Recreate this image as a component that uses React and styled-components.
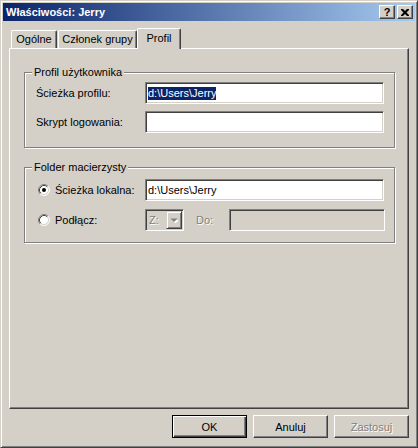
import styled, { createGlobalStyle } from "styled-components";

const GlobalStyle = createGlobalStyle`
  html, body {
    margin: 0;
    padding: 0;
    background: #d4d0c8;
  }

  body {
    font-family: "Liberation Sans", Arial, sans-serif;
    font-size: 11px;
    color: #000;
  }
`;

function RadioMark({ checked }) {
  return (
    <svg width="12" height="12" viewBox="0 0 12 12">
      <circle cx="6" cy="6" r="5" fill="#fff" />
      <path d="M2.11 9.89 A5.5 5.5 0 0 1 9.89 2.11" stroke="#808080" fill="none" />
      <path d="M9.89 2.11 A5.5 5.5 0 0 1 2.11 9.89" stroke="#fff" fill="none" />
      <path d="M2.82 9.18 A4.5 4.5 0 0 1 9.18 2.82" stroke="#404040" fill="none" />
      <path d="M9.18 2.82 A4.5 4.5 0 0 1 2.82 9.18" stroke="#d4d0c8" fill="none" />
      {checked && <circle cx="6" cy="6" r="2" fill="#000" />}
    </svg>
  );
}

function DownArrow() {
  return (
    <svg width="8" height="5" viewBox="0 0 8 5">
      <path d="M2 2h7l-3.5 3.5z" fill="#fff" />
      <path d="M0.5 0.5h7l-3.5 3.5z" fill="#808080" />
    </svg>
  );
}

export default function App() {
  return (
    <>
      <GlobalStyle />
      <Window>
        <TitleBar>
          <TitleText>Właściwości: Jerry</TitleText>
          <CaptionButton>?</CaptionButton>
          <CaptionButton $gap={2}>
            <svg width="8" height="7" viewBox="0 0 8 7">
              <path d="M0 0h2l2 2 2-2h2v1L5.5 3.5 8 6v1H6L4 5 2 7H0V6l2.5-2.5L0 1z" fill="#000" />
            </svg>
          </CaptionButton>
        </TitleBar>

        <Body>
          <TabStrip>
            <Tab $width={46}>Ogólne</Tab>
            <Tab $width={79} $offset={1}>Członek grupy</Tab>
            <Tab $width={44} $selected>Profil</Tab>
          </TabStrip>

          <Panel>
            <GroupBox>
              <Caption>Profil użytkownika</Caption>
              <Row>
                <FieldLabel>Ścieżka profilu:</FieldLabel>
                <Edit $width={239}>
                  <Selection>d:\Users\Jerry</Selection>
                </Edit>
              </Row>
              <Row>
                <FieldLabel>Skrypt logowania:</FieldLabel>
                <Edit $width={239} />
              </Row>
            </GroupBox>

            <GroupBox $gapAfterFirst={11} $gapRows={8}>
              <Caption>Folder macierzysty</Caption>
              <Row $radio>
                <RadioLabel>
                  <RadioMark checked />
                  <span>Ścieżka lokalna:</span>
                </RadioLabel>
                <Edit $width={239}>d:\Users\Jerry</Edit>
              </Row>
              <Row $radio>
                <RadioLabel>
                  <RadioMark />
                  <span>Podłącz:</span>
                </RadioLabel>
                <Combo>
                  <DisabledText>Z:</DisabledText>
                  <ComboButton>
                    <DownArrow />
                  </ComboButton>
                </Combo>
                <DoLabel>Do:</DoLabel>
                <Edit $width={156} $disabled />
              </Row>
            </GroupBox>
          </Panel>

          <ButtonRow>
            <PushButton $default>OK</PushButton>
            <PushButton>Anuluj</PushButton>
            <PushButton disabled>Zastosuj</PushButton>
          </ButtonRow>
        </Body>
      </Window>
    </>
  );
}

const Window = styled.div`
  width: 418px;
  height: 448px;
  box-sizing: border-box;
  padding: 2px;
  border: 1px solid;
  border-color: #d4d0c8 #404040 #404040 #d4d0c8;
  box-shadow: inset 1px 1px 0 #fff, inset -1px -1px 0 #808080;
  background: #d4d0c8;
  display: flex;
  flex-direction: column;
`;

const TitleBar = styled.div`
  height: 18px;
  display: flex;
  align-items: center;
  padding: 0 2px 0 3px;
  background: linear-gradient(to right, #0a246a, #a6caf0);
  color: #fff;
  font-weight: bold;
`;

const TitleText = styled.div`
  flex: 1;
  line-height: 13px;
`;

const CaptionButton = styled.div`
  width: 16px;
  height: 14px;
  box-sizing: border-box;
  margin-left: ${(p) => p.$gap || 0}px;
  display: flex;
  align-items: center;
  justify-content: center;
  background: #d4d0c8;
  border: 1px solid;
  border-color: #fff #404040 #404040 #fff;
  box-shadow: inset -1px -1px 0 #808080;
  color: #000;
  font-size: 11px;
  font-weight: bold;
  line-height: 11px;
`;

const Body = styled.div`
  flex: 1;
  padding: 7px 6px 0;
  display: flex;
  flex-direction: column;
`;

const TabStrip = styled.div`
  position: relative;
  z-index: 1;
  height: 21px;
  margin-bottom: -1px;
  padding-left: 2px;
  display: flex;
  align-items: flex-start;
`;

const Tab = styled.div`
  width: ${(p) => p.$width}px;
  height: ${(p) => (p.$selected ? 21 : 18)}px;
  margin-top: ${(p) => (p.$selected ? 0 : 2)}px;
  margin-left: ${(p) => p.$offset || 0}px;
  box-sizing: border-box;
  padding-top: ${(p) => (p.$selected ? 3 : 2)}px;
  display: flex;
  justify-content: center;
  background: #d4d0c8;
  border-left: 1px solid #fff;
  border-top: 1px solid #fff;
  border-right: 1px solid #404040;
  border-radius: 2px 2px 0 0;
  box-shadow: inset -1px 0 0 #808080;
  line-height: 13px;
  white-space: nowrap;
`;

const Panel = styled.div`
  height: 361px;
  box-sizing: border-box;
  padding: 23px 13px 0 14px;
  border: 1px solid;
  border-color: #fff #404040 #404040 #fff;
  box-shadow: inset -1px -1px 0 #808080;
  display: flex;
  flex-direction: column;
  gap: 19px;
`;

const GroupBox = styled.div`
  position: relative;
  border: 1px solid #808080;
  box-shadow: 1px 1px 0 #fff, inset 1px 1px 0 #fff;
  padding: ${(p) => p.$gapAfterFirst || 9}px 9px ${(p) => (p.$gapAfterFirst ? 11 : 14)}px 0;
  display: flex;
  flex-direction: column;
  gap: ${(p) => p.$gapRows || 7}px;
`;

const Caption = styled.div`
  position: absolute;
  top: -7px;
  left: 7px;
  padding: 0 2px;
  background: #d4d0c8;
  line-height: 13px;
`;

const Row = styled.div`
  height: 22px;
  display: flex;
  align-items: center;
  padding-left: ${(p) => (p.$radio ? 13 : 11)}px;
`;

const FieldLabel = styled.div`
  width: 109px;
  line-height: 13px;
`;

const RadioLabel = styled.div`
  width: 107px;
  display: flex;
  align-items: center;
  gap: 5px;
  line-height: 13px;

  svg {
    flex: none;
  }
`;

const Edit = styled.div`
  width: ${(p) => p.$width}px;
  height: 22px;
  box-sizing: border-box;
  padding: 0 2px;
  display: flex;
  align-items: center;
  border: 1px solid;
  border-color: #808080 #fff #fff #808080;
  box-shadow: inset 1px 1px 0 #404040, inset -1px -1px 0 #d4d0c8;
  background: ${(p) => (p.$disabled ? "#d4d0c8" : "#fff")};
  line-height: 13px;
  white-space: nowrap;
`;

const Selection = styled.span`
  background: #0a246a;
  color: #fff;
`;

const Combo = styled.div`
  width: 39px;
  height: 22px;
  box-sizing: border-box;
  padding: 1px 1px 1px 3px;
  display: flex;
  align-items: center;
  border: 1px solid;
  border-color: #808080 #fff #fff #808080;
  box-shadow: inset 1px 1px 0 #404040, inset -1px -1px 0 #d4d0c8;
  background: #d4d0c8;
`;

const DisabledText = styled.span`
  flex: 1;
  color: #808080;
  text-shadow: 1px 1px 0 #fff;
  line-height: 13px;
`;

const ComboButton = styled.div`
  width: 16px;
  height: 18px;
  box-sizing: border-box;
  display: flex;
  align-items: center;
  justify-content: center;
  border: 1px solid;
  border-color: #d4d0c8 #404040 #404040 #d4d0c8;
  box-shadow: inset 1px 1px 0 #fff, inset -1px -1px 0 #808080;
`;

const DoLabel = styled.div`
  width: 33px;
  margin-left: 12px;
  color: #808080;
  text-shadow: 1px 1px 0 #fff;
  line-height: 13px;
`;

const ButtonRow = styled.div`
  margin-top: 6px;
  display: flex;
  justify-content: flex-end;
  gap: 6px;
`;

const PushButton = styled.button`
  width: 75px;
  height: 23px;
  box-sizing: border-box;
  padding: 0;
  font-family: inherit;
  font-size: 11px;
  background: #d4d0c8;
  color: #000;
  border: 1px solid;
  border-color: ${(p) => (p.$default ? "#000" : "#fff #404040 #404040 #fff")};
  box-shadow: ${(p) =>
    p.$default
      ? "inset 1px 1px 0 #fff, inset -1px -1px 0 #404040, inset -2px -2px 0 #808080"
      : "inset -1px -1px 0 #808080"};

  &:disabled {
    color: #808080;
    text-shadow: 1px 1px 0 #fff;
  }
`;
